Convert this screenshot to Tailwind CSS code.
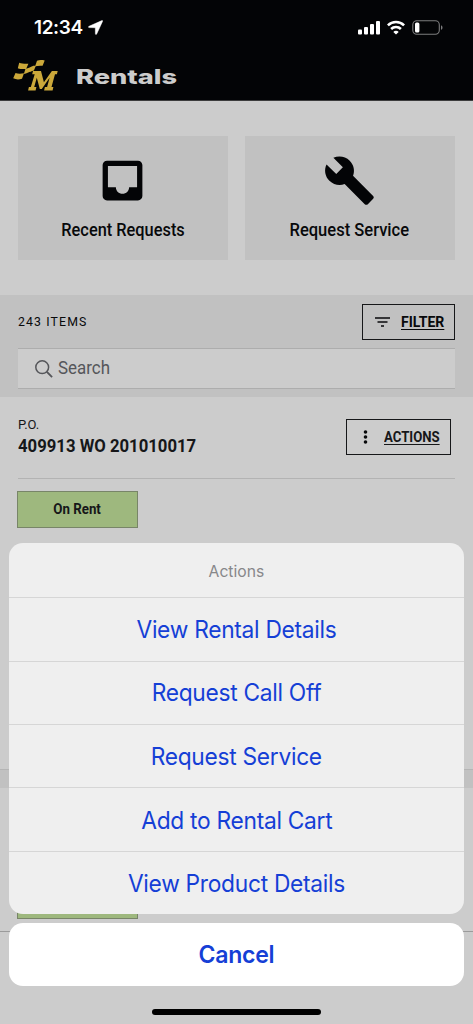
<!DOCTYPE html>
<html lang="en">
<head>
<meta charset="utf-8">
<title>Rentals</title>
<script src="https://cdn.jsdelivr.net/npm/@tailwindcss/browser@4"></script>
</head>
<body class="bg-[#cccccc]">
<div class="relative flex h-[1024px] w-[473px] flex-col overflow-hidden bg-[#cccccc] font-[Roboto,sans-serif] text-[#08090b]">

  <header class="h-[101px] shrink-0 border-b border-[#3c3c3d] bg-[#030406]">
    <div class="flex h-[54px] items-center pl-[34px] pr-[30px]">
      <span class="mt-px font-[Inter,sans-serif] text-[19px] font-semibold leading-6 tracking-[-0.4px] text-white">12:34</span>
      <svg class="ml-[5px] h-[15px] w-[15px]" viewBox="0 0 15 15" fill="#fff" stroke="#fff" stroke-width=".5" stroke-linejoin="round"><path d="M13.900.6 1 6.300c-.8.400-.6 1.300.3 1.300l6 .1.100 6c0 .9.900 1 1.300.2L14.600 1.200c.2-.5-.2-.8-.7-.6z"/></svg>
      <div class="ml-auto flex items-center">
        <svg class="h-[15px] w-[22px]" viewBox="0 0 22 15" fill="#fff"><rect x="0" y="9.500" width="4" height="5" rx="1"/><rect x="6" y="7" width="4" height="7.500" rx="1"/><rect x="12" y="4" width="4" height="10.500" rx="1"/><rect x="18" y="1" width="4" height="13.500" rx="1"/></svg>
        <svg class="ml-[7px] h-[15px] w-[18px]" viewBox="0 0 18 15" fill="none" stroke="#fff" stroke-width="2.600"><path d="M.9 5.400a11.500 11.500 0 0 1 16.200 0"/><path d="M4.100 9a7 7 0 0 1 9.800 0"/><path d="M9 14.500 6.300 11.900a3.700 3.700 0 0 1 5.400 0z" fill="#fff" stroke="none"/></svg>
        <svg class="ml-[7px] h-[15px] w-[31px]" viewBox="0 0 31 15"><rect x=".8" y=".8" width="26.500" height="13.400" rx="4" fill="none" stroke="#7c7c7d" stroke-width="1.100"/><rect x="3" y="2.500" width="4.400" height="10" rx="1.500" fill="#fff"/><path d="M29 5.200c2 .8 2 3.800 0 4.600z" fill="#7c7c7d"/></svg>
      </div>
    </div>
    <div class="flex items-start pl-[13px]">
      <svg class="mt-[6px] h-[32px] w-[46px]" viewBox="0 0 46 32" fill="#cba83a">
        <path d="M6.200 2.800c2.800 1.200 6 1 9.200 1l-2.300 5.200c-2.600.2-5.900.2-8.300-.8z"/>
        <path d="M12.500 8.800c3-.3 5.300-2 8.300-3l-2.700 5.600c-2.400.6-4.300 1.900-7.300 2.700z"/>
        <path d="M2.500 12.900c2.500 1.100 5.700.8 8.500.4l-2 5.500c-2.900.8-6.100.9-8.800-.5z"/>
        <path d="M24 .7c2.400-.8 5.100-.7 7.700-.2l-2.100 5.300c-2.300-.3-5.100-.1-7.500.5z"/>
        <path d="M20 6c1-.3 1.800-.2 2.800-.1l-1.900 4.700-3.500.8z"/>
        <path d="M20 11.100h8l2.900 11.100 8-11.100h5.800l-.8 3.200h-1.900l-3.500 12.700h1.900l-.8 3.500h-8.500l.8-3.500h2.200l2.500-9.300-7.800 11.300h-2l-3-11.300-2.600 9.300h2.200l-.8 3.500h-7.500l.8-3.500h1.900l3.900-12.700h-2.500z"/>
      </svg>
      <h1 class="ml-[17px] mt-[9px] origin-left scale-x-[1.36] font-[Inter,sans-serif] text-[20px] font-extrabold leading-7 text-[#cccccc]">Rentals</h1>
    </div>
  </header>

  <section class="flex shrink-0 gap-[17px] px-[18px] pt-[35px]">
    <div class="flex h-[124px] w-[210px] flex-col items-center bg-[#c1c1c1]">
      <svg class="mr-px mt-[18px] h-[53px] w-[53px]" viewBox="0 0 24 24" fill="#030406"><path d="M19 3H4.990C3.880 3 3 3.900 3 5v14c0 1.100.88 2 1.990 2H19c1.100 0 2-.9 2-2V5c0-1.100-.9-2-2-2zm-.4 12h-3.600c0 1.660-1.350 3-3 3s-3-1.340-3-3H5.400V5.400h13.200z"/></svg>
      <span class="mt-[11px] scale-x-[.935] text-[17.500px] font-medium leading-6">Recent Requests</span>
    </div>
    <div class="flex h-[124px] w-[210px] flex-col items-center bg-[#c1c1c1]">
      <svg class="mr-px mt-[18px] h-[53px] w-[53px]" viewBox="0 0 24 24" fill="#030406"><path d="M22.700 19l-9.100-9.100c.9-2.300.4-5-1.500-6.900-2-2-5-2.400-7.400-1.300L9 6 6 9 1.600 4.700C.4 7.100.9 10.100 2.900 12.100c1.900 1.900 4.600 2.400 6.900 1.500l9.100 9.100c.4.4 1 .4 1.400 0l2.300-2.300c.5-.4.5-1.100.1-1.400z"/></svg>
      <span class="mr-px mt-[11px] scale-x-[.945] text-[17.500px] font-medium leading-6">Request Service</span>
    </div>
  </section>

  <section class="mt-[35px] h-[102px] shrink-0 bg-[#c1c1c1] px-[18px] pt-[9px]">
    <div class="flex items-center justify-between">
      <span class="origin-left scale-x-[.945] text-[13px] leading-5 tracking-[1.200px]">243 ITEMS</span>
      <div class="flex h-9 w-[93px] items-center border border-[#161719] pl-[12px]">
        <svg class="h-[10px] w-[15px]" viewBox="0 0 15 10" fill="none" stroke="#08090b" stroke-width="1.600"><path d="M0 1h15M2.500 5h10M6 9h3"/></svg>
        <span class="ml-[11px] text-[14px] font-bold leading-5 underline underline-offset-2 decoration-1">FILTER</span>
      </div>
    </div>
    <div class="mt-2 flex h-[41px] items-center border-y border-[#adadad] bg-[#cccccc] pl-[17px] text-[#55565a]">
      <svg class="h-[18px] w-[18px]" viewBox="0 0 18 18" fill="none" stroke="#55565a" stroke-width="1.500"><circle cx="7.200" cy="7.200" r="6.400"/><path d="m11.900 11.900 5.200 5.200" stroke-width="1.900"/></svg>
      <span class="-mt-[2px] ml-[5px] origin-left scale-x-[.94] text-[18px] leading-6">Search</span>
    </div>
  </section>

  <section class="shrink-0 px-[18px] pt-[18px] text-[#161719]">
    <div class="flex h-[64px] items-start justify-between border-b border-[#b3b3b3] pr-1">
      <div class="flex flex-col">
        <span class="text-[13px] leading-[19px]">P.O.</span>
        <span class="origin-left scale-x-[.928] text-[18px] font-bold leading-6">409913 WO 201010017</span>
      </div>
      <div class="mt-[4px] flex h-9 w-[105px] items-center border border-[#161719] pl-[16px]">
        <svg class="h-[14px] w-[5px]" viewBox="0 0 5 14" fill="#08090b"><circle cx="2.500" cy="2" r="1.800"/><circle cx="2.500" cy="7" r="1.800"/><circle cx="2.500" cy="12" r="1.800"/></svg>
        <span class="ml-[16px] origin-left scale-x-[.94] text-[14px] font-bold leading-5 underline underline-offset-2 decoration-1">ACTIONS</span>
      </div>
    </div>
    <div class="-ml-px mt-3 flex h-[37px] w-[121px] items-center justify-center border border-[#788568] bg-[#9eb87e] text-[14px] font-bold"><span class="scale-x-[.95]">On Rent</span></div>
  </section>

  <div class="mt-[241px] h-[19px] shrink-0 border-t border-[#b5b5b5] bg-[#c1c1c1]"></div>
  <div class="ml-[17px] mt-[94px] h-[37px] w-[121px] shrink-0 border border-[#788568] bg-[#9eb87e]"></div>
  <div class="mt-[12px] h-px shrink-0 bg-[#9b9b9b]"></div>

  <div class="absolute inset-x-[9px] bottom-0 top-[543px] flex flex-col font-[Inter,sans-serif] text-[24px] tracking-[-0.3px] text-[#153fd6]">
    <div class="flex h-[371px] shrink-0 flex-col divide-y divide-[#d6d6d6] overflow-hidden rounded-[14px] bg-[#efefef] text-center">
      <div class="h-[55px] text-[16px] leading-[56px] tracking-normal text-[#87878a]"><span class="inline-block scale-x-[.98]">Actions</span></div>
      <div class="flex flex-1 items-center justify-center pt-[2px]"><span class="scale-x-[.948]">View Rental Details</span></div>
      <div class="flex flex-1 items-center justify-center pt-px"><span class="scale-x-[.948]">Request Call Off</span></div>
      <div class="flex flex-1 items-center justify-center pt-[2px]"><span class="scale-x-[.948]">Request Service</span></div>
      <div class="flex flex-1 items-center justify-center pt-[2px]"><span class="scale-x-[.948]">Add to Rental Cart</span></div>
      <div class="flex flex-1 items-center justify-center pt-px"><span class="scale-x-[.948]">View Product Details</span></div>
    </div>
    <div class="mt-[9px] flex h-[63px] shrink-0 items-center justify-center rounded-[14px] bg-white font-semibold"><span class="scale-x-[.96]">Cancel</span></div>
    <div class="mx-auto mt-[23px] h-[6px] w-[169px] rounded-full bg-black"></div>
  </div>
</div>
</body>
</html>
